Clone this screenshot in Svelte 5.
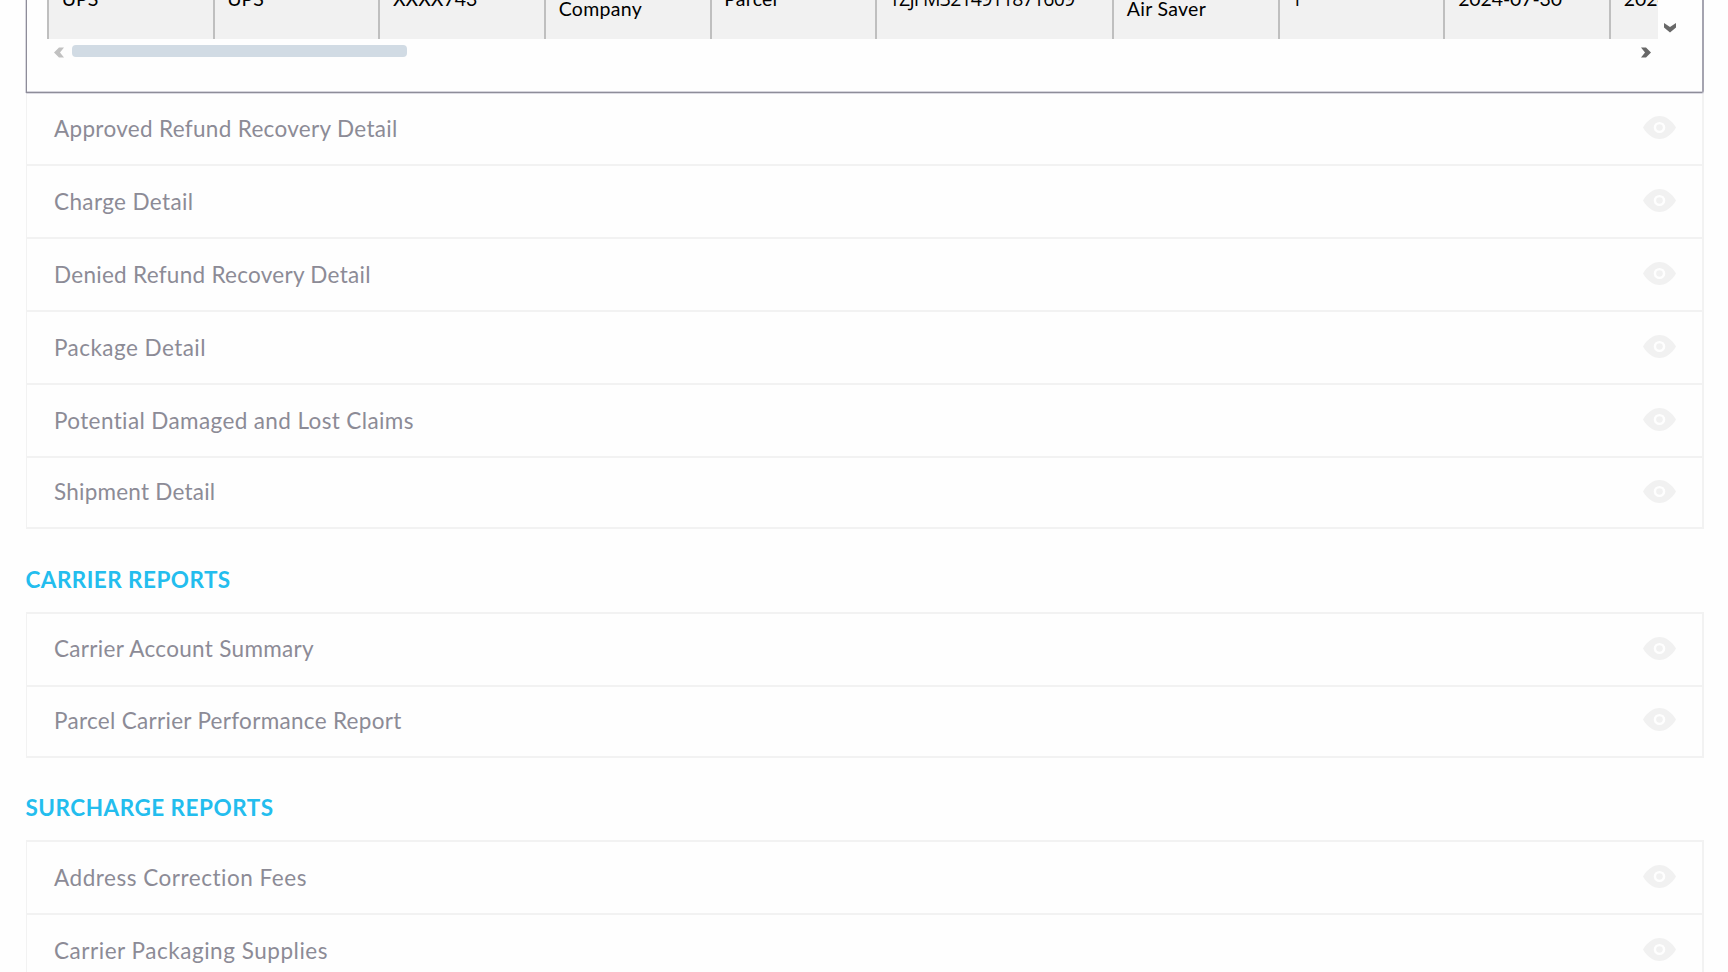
<script>
  const cells = [
    { lines: ['UPS'], w: 165.6, ls: 0 },
    { lines: ['UPS'], w: 165.6, ls: 0 },
    { lines: ['XXXX743'], w: 165.8, ls: 0 },
    { lines: ['Sample', 'Company'], w: 165.6, ls: 0.3 },
    { lines: ['Parcel'], w: 165.6, ls: 0.2 },
    { lines: ['1ZJFM3214911871609'], w: 236.9, ls: -0.8, code: true },
    { lines: ['Next Day', 'Air Saver'], w: 165.6, ls: 0.3 },
    { lines: ['1'], w: 165.8, ls: 0, code: true },
    { lines: ['2024-07-30'], w: 165.6, ls: -0.12 },
    { lines: ['2024-08-03'], w: 165.6, ls: 0 }
  ];
  const accountRows = [
    ['Approved Refund Recovery Detail', 0.32],
    ['Charge Detail', 0.38],
    ['Denied Refund Recovery Detail', 0.28],
    ['Package Detail', 0.46],
    ['Potential Damaged and Lost Claims', 0.38],
    ['Shipment Detail', 0.23]
  ];
  const groups = [
    { title: 'CARRIER REPORTS', ls: 0.45, rows: [['Carrier Account Summary', 0.32], ['Parcel Carrier Performance Report', 0.3]] },
    { title: 'SURCHARGE REPORTS', ls: 0.5, rows: [['Address Correction Fees', 0.52], ['Carrier Packaging Supplies', 0.53], ['Fuel Surcharges', 0.3]] }
  ];
</script>

{#snippet row(label, ls)}
  <li class="row">
    <span style="letter-spacing:{ls}px">{label}</span>
    <svg class="eye" viewBox="0 0 33 24" preserveAspectRatio="none" aria-hidden="true">
      <path fill="#f1f1f1" fill-rule="evenodd" d="M0 12C4 5 10 0 16.500 0S29 5 33 12C29 19 23 24 16.500 24S4 19 0 12ZM16.500 6.200a5.800 5.800 0 1 0 0 11.600a5.800 5.800 0 1 0 0-11.600Z" />
      <circle cx="16.500" cy="12" r="3.300" fill="#f1f1f1" />
    </svg>
  </li>
{/snippet}

<main>
  <section class="preview">
    <div class="view">
      <div class="cells">
        {#each cells as c}
          <div class="cell" class:code={c.code} style="width:{c.w}px">
            <div class="text" style="letter-spacing:{c.ls}px">
              {#each c.lines as l}<div>{l}</div>{/each}
            </div>
          </div>
        {/each}
      </div>
      <svg class="down" viewBox="0 0 12 10"><path d="M0 0L6 4L12 0V4.500L6 9.500L0 4.500Z" fill="#686868" /></svg>
    </div>
    <div class="scroll">
      <svg class="left" viewBox="0 0 10 10"><path d="M10 0H5L0 5L5 10H10L6 5Z" fill="#c1c1c1" /></svg>
      <div class="thumb"></div>
      <svg class="right" viewBox="0 0 10 10"><path d="M0 0H5L10 5L5 10H0L4 5Z" fill="#686868" /></svg>
    </div>
  </section>
  <ul class="list first">
    {#each accountRows as [label, ls]}{@render row(label, ls)}{/each}
  </ul>
  {#each groups as g}
    <h2><span style="letter-spacing:{g.ls}px">{g.title}</span></h2>
    <ul class="list">
      {#each g.rows as [label, ls]}{@render row(label, ls)}{/each}
    </ul>
  {/each}
</main>

<style>
  :global(body) { margin: 0; background: #fefefe; overflow: hidden; }
  main {
    box-sizing: border-box;
    width: 1728px;
    height: 972px;
    overflow: hidden;
    padding: 0 24px 0 26px;
    font-family: Lato, sans-serif;
    color: #8c8b96;
  }
  .preview {
    position: relative;
    box-sizing: border-box;
    height: 93px;
    border: solid #8e8d99;
    border-width: 0 2px 1px 1px;
    border-right-color: #a5a4b0;
    border-radius: 0 0 2px 0;
    box-shadow: -1px 0 #d9d8df, 0 1px #dcdbe3, inset 0 -1px #d5d4dc;
    padding-left: 20px;
  }
  .view { display: flex; height: 39px; }
  .cells { display: flex; width: 1610.5px; height: 39px; overflow: hidden; background: #f1f1f1; }
  .cell {
    flex: none;
    box-sizing: border-box;
    display: flex;
    align-items: center;
    height: 39px;
    border-left: 2px solid #bfbfbf;
    padding-left: 12.7px;
    color: #000;
    font-size: 19.5px;
    line-height: 20px;
  }
  .text { margin-top: -41px; white-space: nowrap; }
  .code { font-family: 'Open Sans', sans-serif; padding-left: 11.5px; }
  .down { width: 12px; height: 10px; margin: 22.5px 0 0 6.5px; }
  .scroll { display: flex; align-items: center; height: 24px; padding-left: 7px; }
  .left, .right { width: 10px; height: 11px; margin-top: 2px; }
  .thumb { width: 335px; height: 12px; border-radius: 4px; background: #d1dbe4; margin-left: 8px; }
  .right { margin-left: 1234px; }
  .list {
    list-style: none;
    margin: 0;
    padding: 0;
    border: solid #f2f2f2;
    border-width: 2px 2px 2px 1px;
  }
  .first { border-top: 0; }
  .row {
    box-sizing: border-box;
    height: 73px;
    border-bottom: 2px solid #f2f2f2;
    display: flex;
    align-items: center;
    justify-content: space-between;
    padding: 0 26px 1px 27px;
    font-size: 22.5px;
    white-space: nowrap;
  }
  .row:last-child { height: 69px; border-bottom: 0; padding-bottom: 2px; }
  .eye { width: 33px; height: 23px; margin-bottom: 1px; }
  h2 {
    margin: 0 0 0 -0.5px;
    height: 82.6px;
    display: flex;
    align-items: center;
    box-sizing: border-box;
    padding-top: 18px;
    font-size: 22.5px;
    color: #23bdee;
  }
</style>
